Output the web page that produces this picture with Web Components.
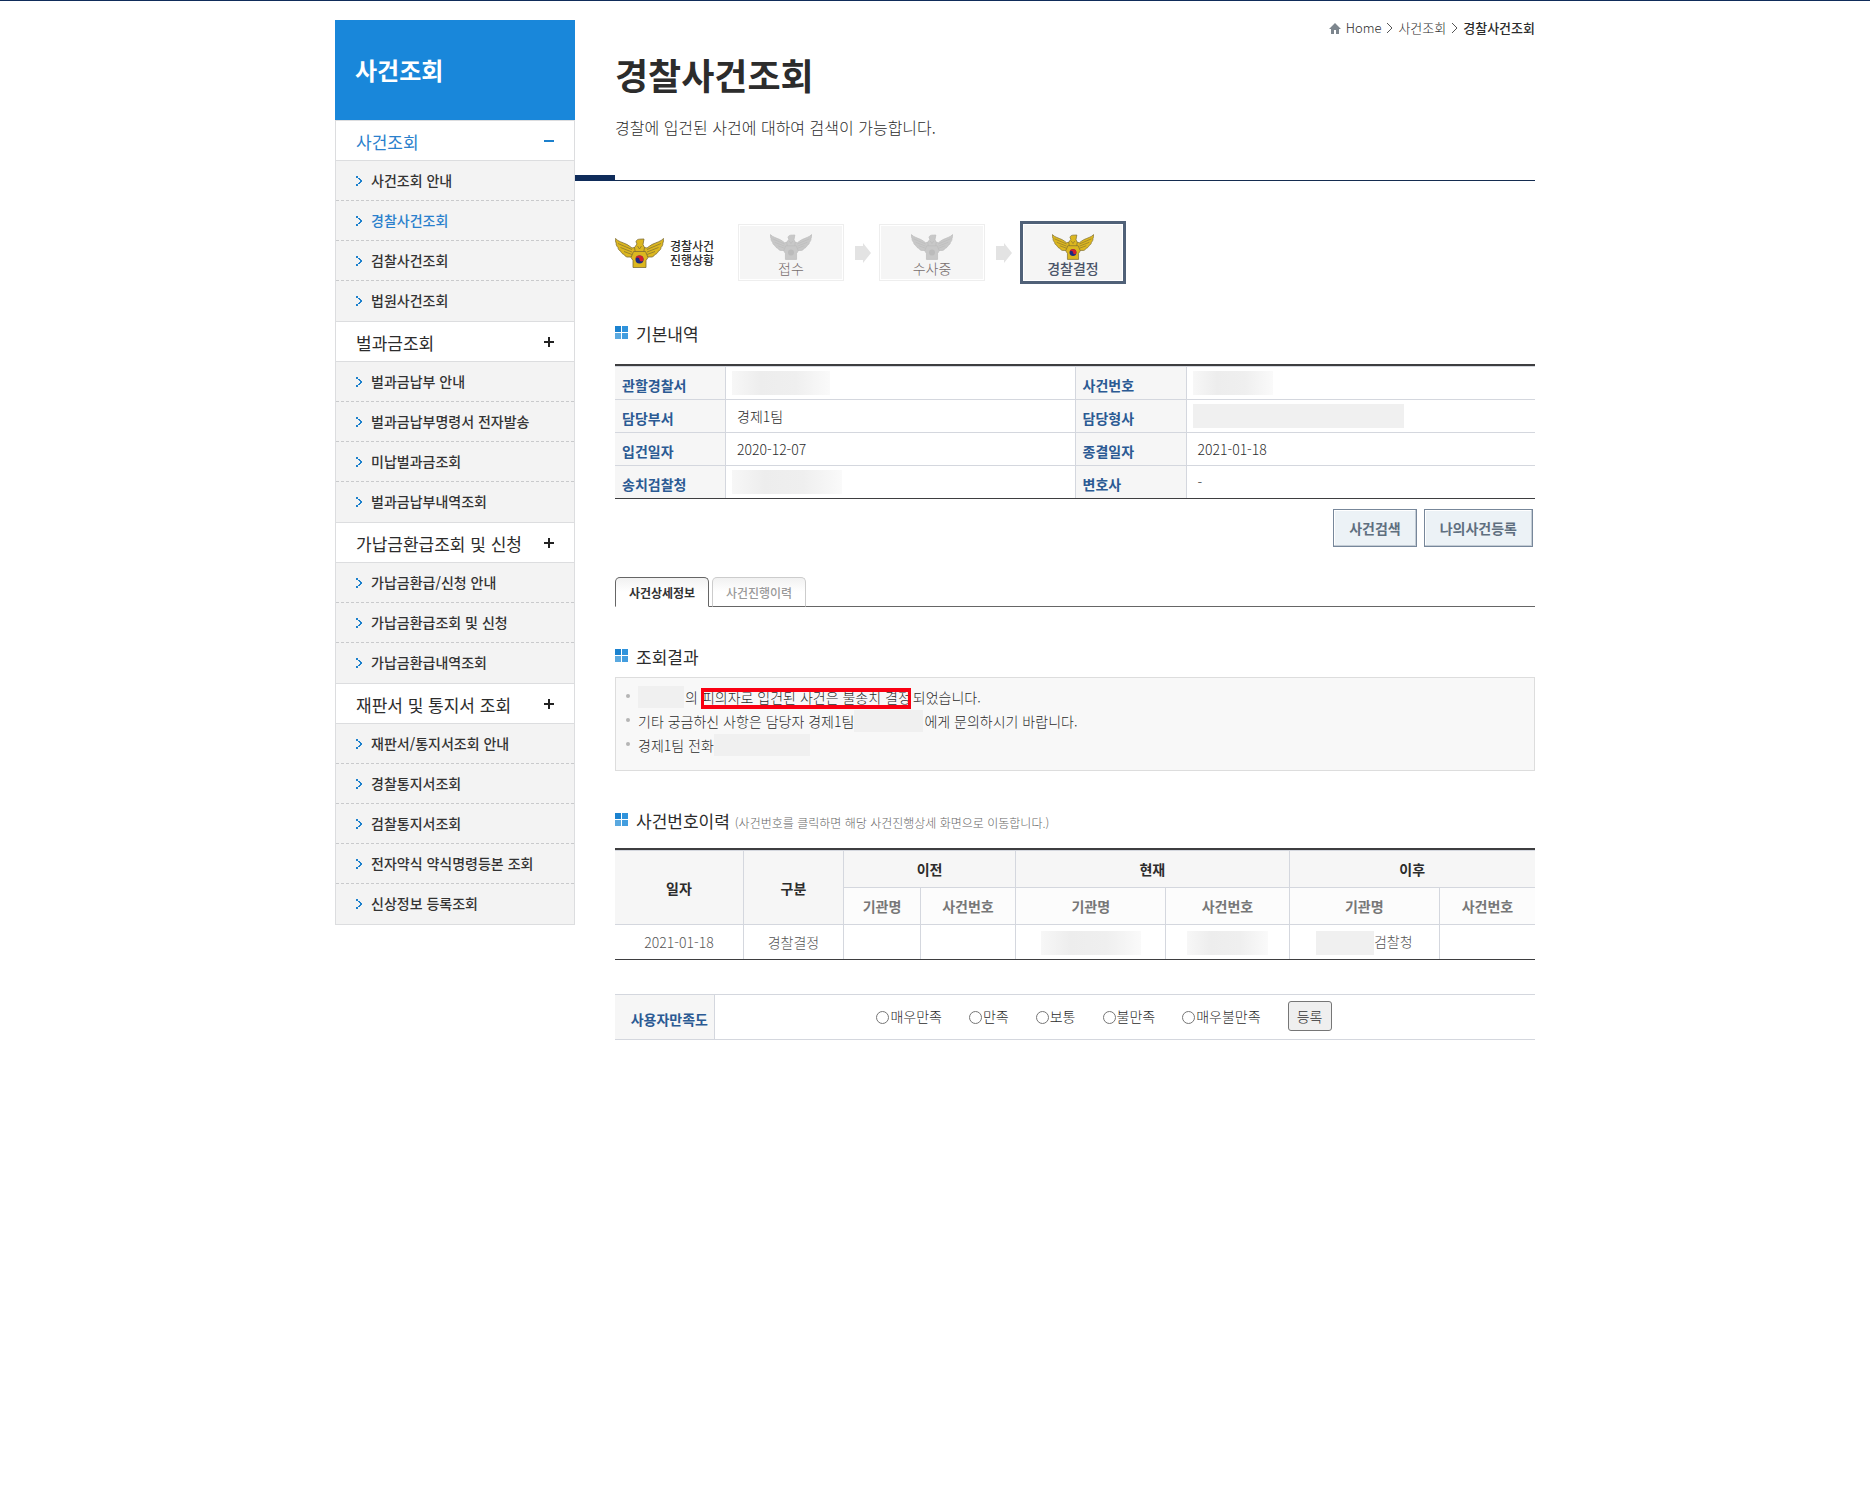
<!DOCTYPE html>
<html lang="ko">
<head>
<meta charset="utf-8">
<meta name="viewport" content="width=device-width, initial-scale=1">
<title>경찰사건조회</title>
<style>
  :root {
    --navy: #0f2c5a;
    --blue: #1987da;
    --label: #2b5a93;
    --line: #d4d7de;
    --head-bg: #f6f6f6;
  }
  body {
    margin: 0;
    border-top: 1px solid var(--navy);
    background: #fff;
    color: #2c2c2c;
    font: 14px/24px "Noto Sans CJK KR", "Noto Sans", sans-serif;
  }
</style>
</head>
<body>
<case-layout>
  <side-menu slot="side" heading="사건조회">
    <menu-group heading="사건조회" open>
      <menu-item>사건조회 안내</menu-item>
      <menu-item current>경찰사건조회</menu-item>
      <menu-item>검찰사건조회</menu-item>
      <menu-item>법원사건조회</menu-item>
    </menu-group>
    <menu-group heading="벌과금조회">
      <menu-item>벌과금납부 안내</menu-item>
      <menu-item>벌과금납부명령서 전자발송</menu-item>
      <menu-item>미납벌과금조회</menu-item>
      <menu-item>벌과금납부내역조회</menu-item>
    </menu-group>
    <menu-group heading="가납금환급조회 및 신청">
      <menu-item>가납금환급/신청 안내</menu-item>
      <menu-item>가납금환급조회 및 신청</menu-item>
      <menu-item>가납금환급내역조회</menu-item>
    </menu-group>
    <menu-group heading="재판서 및 통지서 조회">
      <menu-item>재판서/통지서조회 안내</menu-item>
      <menu-item>경찰통지서조회</menu-item>
      <menu-item>검찰통지서조회</menu-item>
      <menu-item>전자약식 약식명령등본 조회</menu-item>
      <menu-item>신상정보 등록조회</menu-item>
    </menu-group>
  </side-menu>

  <page-header slot="header" heading="경찰사건조회" parent="사건조회">경찰에 입건된 사건에 대하여 검색이 가능합니다.</page-header>

  <progress-steps>
    <progress-step>접수</progress-step>
    <progress-step>수사중</progress-step>
    <progress-step current>경찰결정</progress-step>
  </progress-steps>

  <section-title>기본내역</section-title>
  <basic-info></basic-info>
  <case-actions></case-actions>

  <tab-bar></tab-bar>

  <section-title style="--gap: 8px">조회결과</section-title>
  <case-result></case-result>

  <section-title style="--gap: 15px">사건번호이력<span slot="hint">(사건번호를 클릭하면 해당 사건진행상세 화면으로 이동합니다.)</span></section-title>
  <case-history></case-history>

  <satisfaction-form></satisfaction-form>
</case-layout>

<script>
// attaches an open shadow root filled with the given markup
function render(el, html) {
  el.attachShadow({ mode: 'open' }).innerHTML = html;
}

class CaseLayout extends HTMLElement {
  constructor() {
    super();
    render(this, `
      <style>
        :host {
          display: grid;
          grid-template-columns: 240px minmax(0, 1fr);
          align-items: start;
          max-width: 1200px;
          margin: 0 auto;
          padding-bottom: 40px;
        }
        aside { padding-top: 19px; }
        .content { padding-left: 40px; }
      </style>
      <aside><slot name="side"></slot></aside>
      <main>
        <slot name="header"></slot>
        <div class="content"><slot></slot></div>
      </main>
    `);
  }
}

class SideMenu extends HTMLElement {
  connectedCallback() {
    render(this, `
      <style>
        :host { display: block; }
        h2 {
          margin: 0;
          padding: 0 20px;
          background: var(--blue);
          color: #fff;
          font-size: 24px;
          font-weight: 700;
          line-height: 100px;
        }
        nav { border: solid #dcdddf; border-width: 0 1px 1px; }
      </style>
      <h2>${this.getAttribute('heading')}</h2>
      <nav><slot></slot></nav>
    `);
  }
}

class MenuGroup extends HTMLElement {
  connectedCallback() {
    const open = this.hasAttribute('open');
    render(this, `
      <style>
        :host { display: block; background: #f3f3f3; }
        button {
          display: flex;
          justify-content: space-between;
          align-items: center;
          width: 100%;
          padding: 3px 20px 0;
          border: solid #dcdddf;
          border-width: 1px 0;
          background: #fff;
          color: #2c2c2c;
          font: inherit;
          font-size: 17px;
          line-height: 36px;
          text-align: left;
        }
        :host([open]) button { color: #2a80cc; }
        svg { margin-bottom: 3px; }
      </style>
      <button type="button" aria-expanded="${open}">
        ${this.getAttribute('heading')}
        <svg width="10" height="10" fill="none" stroke="${open ? '#1c80cc' : '#222'}" stroke-width="2">
          <path d="${open ? 'M0 5h10' : 'M0 5h10M5 0v10'}"/>
        </svg>
      </button>
      <slot></slot>
    `);
  }
}

class MenuItem extends HTMLElement {
  constructor() {
    super();
    render(this, `
      <style>
        :host { display: block; border-bottom: 1px dashed #c9cacc; }
        :host(:last-of-type) { border-bottom-color: transparent; }
        a {
          display: flex;
          align-items: center;
          gap: 9px;
          padding-left: 20px;
          color: #333;
          font-weight: 500;
          line-height: 39px;
          text-decoration: none;
        }
        :host([current]) a { color: #2a80cc; }
      </style>
      <a href="#">
        <svg width="6" height="10" fill="#1c80cc" shape-rendering="crispEdges">
          <path d="M0 0h2v2h-2zM2 2h2v1h-2zM3 3h2v1h-2zM4 4h2v2h-2zM3 6h2v1h-2zM2 7h2v1h-2zM0 8h2v2h-2z"/>
        </svg>
        <span><slot></slot></span>
      </a>
    `);
  }
}

class PageHeader extends HTMLElement {
  connectedCallback() {
    const heading = this.getAttribute('heading');
    render(this, `
      <style>
        :host { display: block; padding-top: 15px; }
        .path {
          display: flex;
          justify-content: flex-end;
          align-items: center;
          gap: 5px;
          font-size: 13px;
          font-weight: 300;
        }
        .path a { color: inherit; text-decoration: none; }
        .path b { font-weight: 500; }
        h1 {
          margin: 8px 0 0 40px;
          font-size: 36px;
          font-weight: 700;
          line-height: 52px;
        }
        p {
          margin: 15px 0 0 40px;
          font-size: 16px;
          font-weight: 300;
        }
        .rule {
          display: flex;
          align-items: flex-end;
          margin-top: 36px;
        }
        .rule::before {
          content: '';
          width: 40px;
          height: 6px;
          background: var(--navy);
        }
        .rule::after {
          content: '';
          flex: 1;
          height: 1px;
          background: #142c50;
        }
      </style>
      <nav class="path" aria-label="현재 위치">
        <svg width="12" height="11" fill="#7d868e"><path d="M6 0 0 6h2v5h3V7h2v4h3V6h2z"/></svg>
        <a href="#">Home</a>
        <svg width="7" height="12" fill="none" stroke="#555"><path d="M1 1l5 5-5 5"/></svg>
        <a href="#">${this.getAttribute('parent')}</a>
        <svg width="7" height="12" fill="none" stroke="#555"><path d="M1 1l5 5-5 5"/></svg>
        <b>${heading}</b>
      </nav>
      <h1>${heading}</h1>
      <p><slot></slot></p>
      <div class="rule"></div>
    `);
  }
}

// eagle with the taegeuk on its shield; "muted" gives the grey version
class PoliceEmblem extends HTMLElement {
  connectedCallback() {
    const muted = this.hasAttribute('muted');
    const body = muted ? '#c8c8c8' : '#dcb71f';
    const edge = muted ? '#bbb' : '#7d6c33';
    render(this, `
      <style>
        :host { display: block; width: 42px; height: 26px; }
        svg { display: block; width: 100%; height: 100%; }
      </style>
      <svg viewBox="0 0 49 30" aria-hidden="true">
        <g fill="${body}" stroke="${edge}" stroke-width=".8" stroke-linejoin="round">
          <path id="wing" d="M.5.5C3 3.500 8 4.500 12 6.500c2 1 3.500 2.500 5 3.500l5-1v7l-5 3h-5c-1.500-.5-2.500-1.500-2.800-2.500-2-.5-3-1.800-3.200-3C4 12.500 3 11 3 9.500 1.500 8 1 6.500 1.200 5.200.5 3.500.2 2 .5.500z"/>
          <path d="M48.500.5C46 3.500 41 4.500 37 6.500c-2 1-3.500 2.500-5 3.500l-5-1v7l5 3h5c1.500-.5 2.500-1.500 2.800-2.500 2-.5 3-1.800 3.200-3 2-1 3-2.500 3-4 1.500-1.500 2-3 1.800-4.300.7-1.700 1-3.200.7-4.700z"/>
          <path d="M21 3.800c.3-1.800 2-2.600 3.500-2.600L29 1l-1 5.500 1.500 3-1 6h-8l-1-6L22 6z"/>
          <path d="M18.500 13.500h12l2.500 6-2 3v7H18v-7l-2-3z"/>
        </g>
        <path d="M3 5.500l14 6M5.500 9.500l11.500 4.500M9 13.500l8 3M46 5.500l-14 6M43.500 9.500L32 14M40 13.500l-8 3M22.500 8l2 3 2-3" fill="none" stroke="${edge}" stroke-width=".7"/>
        ${muted ? '<circle cx="24.500" cy="21.500" r="3.500" fill="#bbb"/>' : `
        <circle cx="24.500" cy="21.500" r="4" fill="#1c2a80"/>
        <path d="M20.500 21.500a4 4 0 0 1 8 0 2 2 0 0 1-4 0 2 2 0 0 0-4 0z" fill="#d41f2c"/>`}
      </svg>
    `);
  }
}

class ProgressSteps extends HTMLElement {
  constructor() {
    super();
    render(this, `
      <style>
        :host {
          display: flex;
          align-items: center;
          margin-top: 40px;
        }
        police-emblem { width: 49px; height: 30px; }
        .name {
          box-sizing: border-box;
          width: 74px;
          padding-left: 6px;
          font-size: 12px;
          font-weight: 500;
          line-height: 14px;
        }
        .name span { display: block; }
      </style>
      <police-emblem></police-emblem>
      <div class="name"><span>경찰사건</span><span>진행상황</span></div>
      <slot></slot>
    `);
  }
}

class ProgressStep extends HTMLElement {
  connectedCallback() {
    const current = this.hasAttribute('current');
    render(this, `
      <style>
        :host { display: flex; align-items: center; }
        .box {
          display: flex;
          flex-direction: column;
          align-items: center;
          box-sizing: border-box;
          width: 106px;
          height: 57px;
          padding-top: 9px;
          border: 1px solid #eee;
          background: #f5f5f5;
          box-shadow: inset 0 0 0 1px #fff;
          color: #776d6d;
          font-size: 14px;
          font-weight: 300;
          line-height: 16px;
        }
        :host([current]) .box {
          height: 63px;
          padding-top: 10px;
          border: 3px solid #506178;
          color: #4a5468;
          font-weight: 500;
        }
        svg { margin: 0 8px 0 11px; }
        :host([current]) svg { display: none; }
      </style>
      <div class="box">
        <police-emblem ${current ? '' : 'muted'}></police-emblem>
        <slot></slot>
      </div>
      <svg width="16" height="20" fill="#e3e3e3"><path d="M0 3h8V0l8 10-8 10v-3H0z"/></svg>
    `);
  }
}

class SectionTitle extends HTMLElement {
  constructor() {
    super();
    render(this, `
      <style>
        :host {
          display: flex;
          align-items: center;
          margin: 38px 0 var(--gap, 18px);
        }
        h3 {
          margin: 0 0 0 8px;
          font-size: 17px;
          font-weight: 400;
          line-height: 24px;
        }
        svg { margin-bottom: 3px; }
        slot[name=hint] {
          display: block;
          padding: 3px 0 0 5px;
          color: #666;
          font-size: 12px;
          font-weight: 300;
          line-height: 21px;
        }
      </style>
      <svg width="13" height="13" aria-hidden="true">
        <path d="M0 0h6v6H0z" fill="#1b82cf"/><path d="M7 0h6v6H7z" fill="#2f93dc"/>
        <path d="M0 7h6v6H0z" fill="#5aa9e0"/><path d="M7 7h6v6H7z" fill="#429ddf"/>
      </svg>
      <h3><slot></slot></h3>
      <slot name="hint"></slot>
    `);
  }
}

// smudge that covers private data
class MaskedText extends HTMLElement {
  connectedCallback() {
    render(this, `
      <style>
        :host {
          display: inline-block;
          width: ${this.getAttribute('width')}px;
          height: 24px;
          vertical-align: middle;
          background: linear-gradient(90deg, #f7f7f7, #ededed 30%, #efefef 65%, #fafafa);
        }
        :host([flat]) { background: #f0f0f0; }
      </style>
    `);
  }
}

class BasicInfo extends HTMLElement {
  constructor() {
    super();
    render(this, `
      <style>
        :host {
          display: block;
          border: solid #3e3e40;
          border-width: 2px 0 1px;
        }
        table {
          width: 100%;
          border-spacing: 0;
          table-layout: fixed;
        }
        th, td {
          height: 32px;
          padding: 0;
          border-top: 1px solid var(--line);
          text-align: left;
          line-height: 24px;
        }
        th {
          padding: 3px 0 0 7px;
          height: 29px;
          border-right: 1px solid var(--line);
          background: var(--head-bg);
          color: var(--label);
          font-weight: 700;
        }
        td { padding-left: 11px; font-weight: 300; }
        td + th { border-left: 1px solid var(--line); }
        masked-text { display: block; margin-left: -5px; }
      </style>
      <table>
        <colgroup><col style="width: 111px"><col><col style="width: 112px"><col></colgroup>
        <tr>
          <th scope="row">관할경찰서</th><td><masked-text width="98"></masked-text></td>
          <th scope="row">사건번호</th><td><masked-text width="80"></masked-text></td>
        </tr>
        <tr>
          <th scope="row">담당부서</th><td>경제1팀</td>
          <th scope="row">담당형사</th><td><masked-text width="211" flat></masked-text></td>
        </tr>
        <tr>
          <th scope="row">입건일자</th><td>2020-12-07</td>
          <th scope="row">종결일자</th><td>2021-01-18</td>
        </tr>
        <tr>
          <th scope="row">송치검찰청</th><td><masked-text width="110"></masked-text></td>
          <th scope="row">변호사</th><td>-</td>
        </tr>
      </table>
    `);
  }
}

class CaseActions extends HTMLElement {
  constructor() {
    super();
    render(this, `
      <style>
        :host {
          display: flex;
          justify-content: flex-end;
          gap: 7px;
          padding: 10px 2px 0;
        }
        button {
          padding: 0 15px;
          border: 1px solid #77879a;
          border-radius: 0;
          background: #ecf2f6;
          box-shadow: inset -1px -1px #c3ccd5, inset 1px 1px #fff;
          color: #5f6f7f;
          font: inherit;
          font-weight: 700;
          line-height: 36px;
        }
      </style>
      <button type="button">사건검색</button>
      <button type="button">나의사건등록</button>
    `);
  }
}

class TabBar extends HTMLElement {
  constructor() {
    super();
    render(this, `
      <style>
        :host {
          display: flex;
          gap: 3px;
          margin-top: 30px;
          background: linear-gradient(#666, #666) bottom / 100% 1px no-repeat;
        }
        button {
          width: 94px;
          height: 30px;
          padding: 2px 0 0;
          border: 1px solid #ccc;
          border-bottom-color: #666;
          border-radius: 5px 5px 0 0;
          background: linear-gradient(#f1f1f1, #fff 50%);
          color: #999;
          font: inherit;
          font-size: 12px;
          font-weight: 500;
        }
        button[aria-selected=true] {
          border-color: #666;
          border-bottom-color: #fff;
          color: #333;
          font-weight: 700;
        }
      </style>
      <button type="button" role="tab" aria-selected="true">사건상세정보</button>
      <button type="button" role="tab" aria-selected="false">사건진행이력</button>
    `);
  }

  connectedCallback() {
    this.setAttribute('role', 'tablist');
  }
}

class CaseResult extends HTMLElement {
  constructor() {
    super();
    render(this, `
      <style>
        :host {
          display: block;
          padding: 7px 10px 13px;
          border: 1px solid #ddd;
          background: #f8f8f8;
          font-weight: 300;
        }
        ul { margin: 0; padding: 0; list-style: none; }
        li {
          display: flex;
          align-items: center;
          height: 24px;
        }
        li::before {
          content: '';
          width: 4px;
          height: 4px;
          margin: 0 8px 2px 0;
          border-radius: 50%;
          background: #b5b5b5;
        }
        masked-text { height: 22px; margin-right: 1px; }
        mark {
          position: relative;
          margin: 0 2px 0 4px;
          background: none;
          color: inherit;
        }
        /* marker frame lies over the sentence */
        mark::after {
          content: '';
          position: absolute;
          inset: 3px 0 0 -1px;
          border: solid #fa0012;
          border-width: 4px 3px;
        }
      </style>
      <ul>
        <li><masked-text width="46" flat></masked-text>의<mark>피의자로 입건된 사건은 불송치 결정</mark>되었습니다.</li>
        <li>기타 궁금하신 사항은 담당자 경제1팀<masked-text width="69" flat></masked-text>에게 문의하시기 바랍니다.</li>
        <li>경제1팀 전화<masked-text width="96" flat></masked-text></li>
      </ul>
    `);
  }
}

class CaseHistory extends HTMLElement {
  constructor() {
    super();
    render(this, `
      <style>
        :host {
          display: block;
          border: solid #3e3e40;
          border-width: 2px 0 1px;
        }
        table {
          width: 100%;
          border-spacing: 0;
          table-layout: fixed;
        }
        th, td {
          padding: 0;
          border: solid var(--line);
          border-width: 1px 0 0 1px;
          text-align: center;
        }
        tr:not(.sub) > :first-child { border-left: 0; }
        th { height: 36px; background: var(--head-bg); font-weight: 700; }
        .sub th { background: #fcfcfc; color: #777; }
        td { height: 34px; color: #555; font-weight: 300; }
      </style>
      <table>
        <colgroup>
          <col style="width: 128px"><col style="width: 100px"><col style="width: 77px"><col style="width: 95px">
          <col><col style="width: 123px"><col><col style="width: 96px">
        </colgroup>
        <thead>
          <tr>
            <th rowspan="2" scope="col">일자</th>
            <th rowspan="2" scope="col">구분</th>
            <th colspan="2" scope="colgroup">이전</th>
            <th colspan="2" scope="colgroup">현재</th>
            <th colspan="2" scope="colgroup">이후</th>
          </tr>
          <tr class="sub">
            <th scope="col">기관명</th><th scope="col">사건번호</th>
            <th scope="col">기관명</th><th scope="col">사건번호</th>
            <th scope="col">기관명</th><th scope="col">사건번호</th>
          </tr>
        </thead>
        <tbody>
          <tr>
            <td>2021-01-18</td><td>경찰결정</td><td></td><td></td>
            <td><masked-text width="100"></masked-text></td>
            <td><masked-text width="81"></masked-text></td>
            <td><masked-text width="58" flat></masked-text>검찰청</td><td></td>
          </tr>
        </tbody>
      </table>
    `);
  }
}

class SatisfactionForm extends HTMLElement {
  constructor() {
    super();
    const choices = ['매우만족', '만족', '보통', '불만족', '매우불만족'];
    render(this, `
      <style>
        :host { display: block; margin-top: 34px; }
        form {
          display: flex;
          border: solid var(--line);
          border-width: 1px 0;
        }
        .label {
          box-sizing: border-box;
          width: 100px;
          padding: 4px 6px 0 0;
          border-right: 1px solid var(--line);
          background: var(--head-bg);
          color: var(--label);
          font-weight: 700;
          line-height: 40px;
          text-align: right;
        }
        .choices {
          flex: 1;
          display: flex;
          justify-content: center;
          align-items: center;
          gap: 27px;
          padding: 0 42px 0 0;
          font-weight: 300;
        }
        label { display: flex; align-items: center; gap: 1px; padding-bottom: 2px; }
        input { width: 13px; height: 13px; margin: 2px 0 0; }
        button {
          width: 44px;
          height: 30px;
          margin-bottom: 2px;
          padding: 0;
          border: 1px solid #767676;
          border-radius: 3px;
          background: #efefef;
          color: #333;
          font: inherit;
        }
      </style>
      <form>
        <div class="label" id="q">사용자만족도</div>
        <div class="choices" role="radiogroup" aria-labelledby="q">
          ${choices.map((text, i) => `<label><input type="radio" name="score" value="${5 - i}">${text}</label>`).join('')}
          <button type="button">등록</button>
        </div>
      </form>
    `);
  }
}

customElements.define('case-layout', CaseLayout);
customElements.define('side-menu', SideMenu);
customElements.define('menu-group', MenuGroup);
customElements.define('menu-item', MenuItem);
customElements.define('page-header', PageHeader);
customElements.define('police-emblem', PoliceEmblem);
customElements.define('progress-steps', ProgressSteps);
customElements.define('progress-step', ProgressStep);
customElements.define('section-title', SectionTitle);
customElements.define('masked-text', MaskedText);
customElements.define('basic-info', BasicInfo);
customElements.define('case-actions', CaseActions);
customElements.define('tab-bar', TabBar);
customElements.define('case-result', CaseResult);
customElements.define('case-history', CaseHistory);
customElements.define('satisfaction-form', SatisfactionForm);
</script>
</body>
</html>
